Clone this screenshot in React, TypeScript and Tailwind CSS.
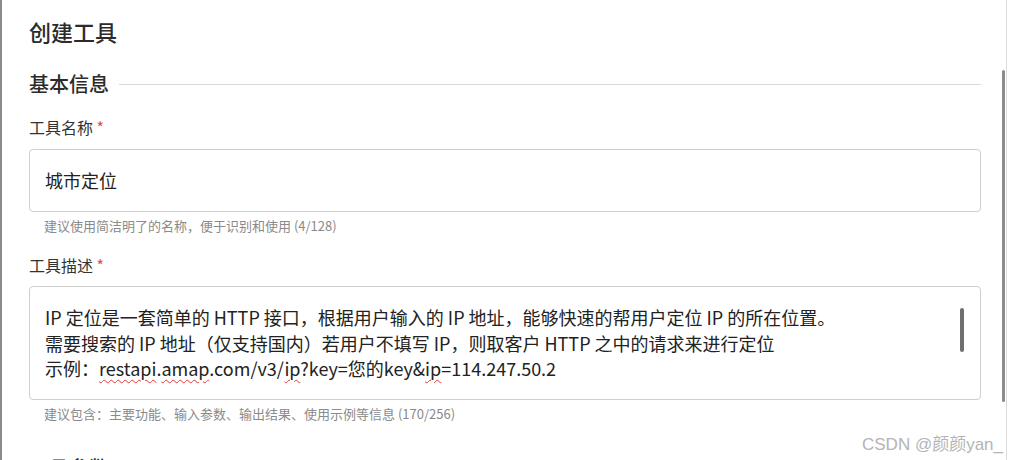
import React from "react";

const Wavy = ({ children }: { children: React.ReactNode }) => (
  <span className="underline decoration-wavy decoration-[#e53935] decoration-1 underline-offset-[3px]">{children}</span>
);

export default function App() {
  return (
    <div
      className="relative flex w-[1009px] h-[460px] overflow-hidden bg-white border-l-2 border-[#8a8a8a] text-[#333]"
      style={{ fontFamily: '"Noto Sans CJK SC", "Noto Sans", sans-serif' }}
    >
      <div className="ml-[27px] w-[952px] shrink-0 pt-[16px]">
        <div className="h-[30px] leading-[30px] text-[22px] font-medium text-[#2b2b2b]">创建工具</div>

        <div className="mt-[24px] h-[28px] flex items-center">
          <span className="text-[20px] leading-[28px] font-medium text-[#2b2b2b]">基本信息</span>
          <div className="ml-[10px] flex-1 h-px bg-[#d8d8e0]" />
        </div>

        <div className="mt-[18px] h-[22px] leading-[22px] text-[16px] text-[#333]">
          工具名称 <span className="text-[#e5484d]">*</span>
        </div>
        <div className="mt-[11px] h-[63px] rounded-[4px] border border-[#cfcfcf] flex items-center px-[15px] text-[18px] text-[#222]">
          城市定位
        </div>
        <div className="mt-[5px] px-[15px] h-[18px] leading-[18px] text-[13px] text-[#8a8a8a]">
          建议使用简洁明了的名称，便于识别和使用 (4/128)
        </div>

        <div className="mt-[19px] h-[22px] leading-[22px] text-[16px] text-[#333]">
          工具描述 <span className="text-[#e5484d]">*</span>
        </div>
        <div className="relative mt-[10px] h-[114px] rounded-[4px] border border-[#cfcfcf] pl-[15px] pr-[30px] pt-[18px] text-[18px] leading-[25.5px] text-[#222]">
          <div>IP 定位是一套简单的 HTTP 接口，根据用户输入的 IP 地址，能够快速的帮用户定位 IP 的所在位置。</div>
          <div>需要搜索的 IP 地址（仅支持国内）若用户不填写 IP，则取客户 HTTP 之中的请求来进行定位</div>
          <div>
            示例：<Wavy>restapi</Wavy>.<Wavy>amap</Wavy>.com/v3/<Wavy>ip</Wavy>?key=您的key&amp;<Wavy>ip</Wavy>=114.247.50.2
          </div>
          <div className="absolute left-[930px] top-[21px] w-[4px] h-[44px] rounded-full bg-[#6f6f6f]" />
        </div>
        <div className="mt-[5px] px-[15px] h-[18px] leading-[18px] text-[13px] text-[#8a8a8a]">
          建议包含：主要功能、输入参数、输出结果、使用示例等信息 (170/256)
        </div>

        <div className="mt-[31px] h-[28px] flex items-center">
          <span className="text-[20px] leading-[28px] font-medium text-[#2b2b2b]">工具参数</span>
        </div>
      </div>

      <div className="flex-1 flex justify-end">
        <div className="mt-[70px] w-[3px] h-[332px] rounded-full bg-[#8c8c8c]" />
        <div className="ml-[1px] w-px h-full bg-[#dcdcdc]" />
        <div className="w-[2px]" />
      </div>

      <div
        className="absolute right-[6px] top-[432px] text-[17px] text-[#b4b4b4]"
        style={{ fontFamily: '"Liberation Sans", "Noto Sans CJK SC", sans-serif' }}
      >
        CSDN @颜颜yan_
      </div>
    </div>
  );
}
